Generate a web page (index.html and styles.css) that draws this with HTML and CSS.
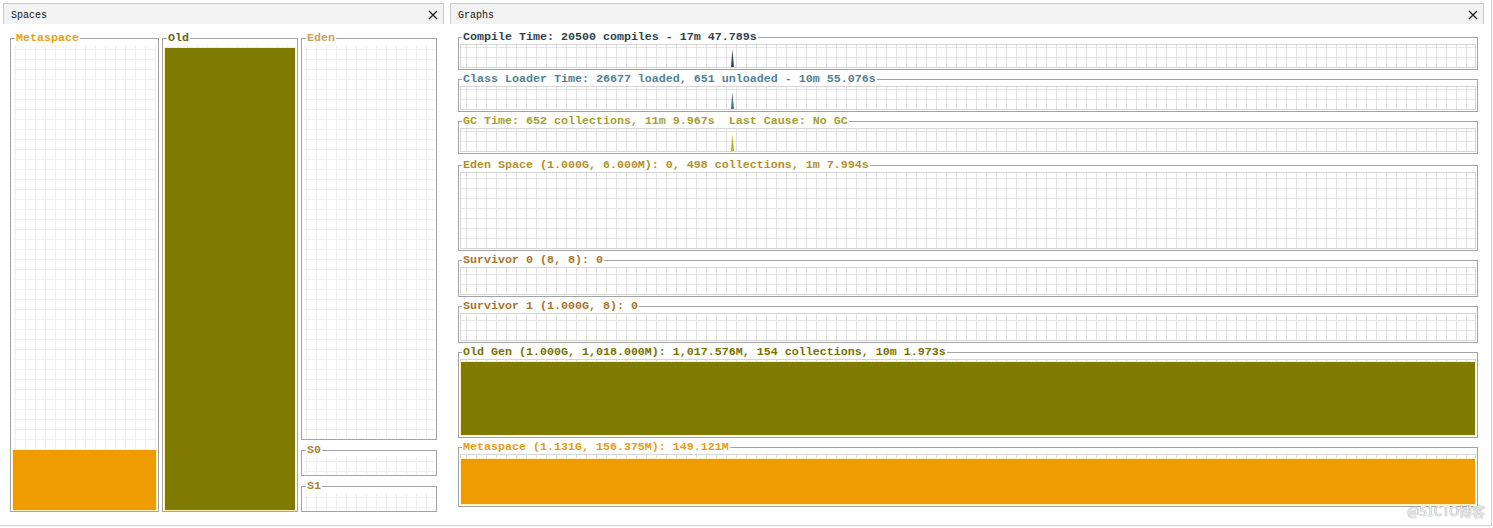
FILE: index.html
```html
<!DOCTYPE html>
<html lang="en">
<head>
<meta charset="utf-8">
<title>Visual GC</title>
<link rel="stylesheet" href="styles.css">
</head>
<body>
<div class="frame">
  <div class="app">
    <section class="panel panel-spaces">
      <header class="panel-head">
        <span class="panel-title">Spaces</span>
        <span class="close"><svg width="10" height="10" viewBox="0 0 10 10"><path d="M1 1L9 9M9 1L1 9" stroke="#222" stroke-width="1.3" fill="none"/></svg></span>
      </header>
      <div class="spaces-body">
        <fieldset class="box box-meta">
          <legend class="lg lg-meta">Metaspace</legend>
          <div class="plot grid-light p-tall"><div class="fill fill-orange" style="height:12.9%"></div></div>
        </fieldset>
        <fieldset class="box box-old">
          <legend class="lg lg-old">Old</legend>
          <div class="plot grid-light p-tall"><div class="fill fill-olive" style="height:99.4%"></div></div>
        </fieldset>
        <div class="col-right">
          <fieldset class="box box-eden">
            <legend class="lg lg-eden">Eden</legend>
            <div class="plot grid-light p-eden"></div>
          </fieldset>
          <fieldset class="box box-s">
            <legend class="lg lg-s">S0</legend>
            <div class="plot grid-light p-s"></div>
          </fieldset>
          <fieldset class="box box-s">
            <legend class="lg lg-s">S1</legend>
            <div class="plot grid-light p-s"></div>
          </fieldset>
        </div>
      </div>
    </section>
    <section class="panel panel-graphs">
      <header class="panel-head">
        <span class="panel-title">Graphs</span>
        <span class="close"><svg width="10" height="10" viewBox="0 0 10 10"><path d="M1 1L9 9M9 1L1 9" stroke="#222" stroke-width="1.3" fill="none"/></svg></span>
      </header>
      <div class="graphs-body">
        <fieldset class="gbox">
          <legend class="lg lg-compile">Compile Time: 20500 compiles - 17m 47.789s</legend>
          <div class="plot grid p-small"><div class="spike spike-compile"></div></div>
        </fieldset>
        <fieldset class="gbox">
          <legend class="lg lg-class">Class Loader Time: 26677 loaded, 651 unloaded - 10m 55.076s</legend>
          <div class="plot grid p-small"><div class="spike spike-class"></div></div>
        </fieldset>
        <fieldset class="gbox">
          <legend class="lg lg-gc">GC Time: 652 collections, 11m 9.967s  Last Cause: No GC</legend>
          <div class="plot grid p-small"><div class="spike spike-gc"></div></div>
        </fieldset>
        <fieldset class="gbox g-eden">
          <legend class="lg lg-eden-g">Eden Space (1.000G, 6.000M): 0, 498 collections, 1m 7.994s</legend>
          <div class="plot grid p-large"></div>
        </fieldset>
        <fieldset class="gbox">
          <legend class="lg lg-surv">Survivor 0 (8, 8): 0</legend>
          <div class="plot grid p-surv"></div>
        </fieldset>
        <fieldset class="gbox">
          <legend class="lg lg-surv">Survivor 1 (1.000G, 8): 0</legend>
          <div class="plot grid p-surv"></div>
        </fieldset>
        <fieldset class="gbox">
          <legend class="lg lg-oldgen">Old Gen (1.000G, 1,018.000M): 1,017.576M, 154 collections, 10m 1.973s</legend>
          <div class="plot grid p-large"><div class="fill fill-olive" style="height:98%"></div></div>
        </fieldset>
        <fieldset class="gbox">
          <legend class="lg lg-meta-g">Metaspace (1.131G, 156.375M): 149.121M</legend>
          <div class="plot grid p-meta"><div class="fill fill-orange" style="height:92%"></div></div>
        </fieldset>
      </div>
    </section>
  </div>
  <div class="watermark">@51CTO博客</div>
</div>
</body>
</html>
```

FILE: styles.css
```css
html, body {
  margin: 0;
  padding: 0;
  background: #ffffff;
}

.frame {
  position: relative;
  width: 1492px;
  height: 526px;
  box-sizing: border-box;
  border-right: 1px solid #cfcfcf;
  border-bottom: 1px solid #cfcfcf;
  overflow: hidden;
}

.app {
  display: flex;
  gap: 6px;
  padding: 3px 0 0 3px;
}

.panel {
  display: flex;
  flex-direction: column;
}

.panel-spaces { width: 441px; }
.panel-graphs { width: 1034px; }

.panel-head {
  height: 21px;
  box-sizing: border-box;
  border: 1px solid #cacaca;
  border-bottom: none;
  background: #f3f3f3;
  display: flex;
  align-items: center;
  justify-content: space-between;
  padding: 2px 5px 0 7px;
}

.panel-title {
  font-family: "Liberation Mono", "DejaVu Sans Mono", monospace;
  font-size: 10px;
  color: #111;
}

.close {
  display: flex;
  width: 10px;
  height: 10px;
}

/* ---------- Spaces ---------- */
.spaces-body {
  display: flex;
  align-items: flex-start;
  gap: 3px;
  padding: 8px 6px 0 7px;
}

.box, .gbox {
  margin: 0;
  border: 1px solid #a3a3a3;
  min-width: 0;
  box-sizing: border-box;
  display: block;
}

.box {
  padding: 1px 2px 1px 2px;
}

.box-meta { width: 149px; }
.box-old { width: 136px; }

.col-right {
  width: 136px;
  display: flex;
  flex-direction: column;
  gap: 4px;
}

.p-tall { height: 465px; }
.p-eden { height: 393px; }
.p-s { height: 17px; }

.lg {
  font-family: "Liberation Mono", "DejaVu Sans Mono", monospace;
  font-weight: bold;
  font-size: 11.67px;
  line-height: 12px;
  padding: 0 1px;
  margin-left: 2px;
  white-space: pre;
}

.lg-meta { color: #e8a012; }
.lg-old { color: #66620c; }
.lg-eden { color: #c9a35c; }
.lg-s { color: #ae823c; }

.lg-compile { color: #2e3f4b; }
.lg-class { color: #4f8294; }
.lg-gc { color: #a3a12e; }
.lg-eden-g { color: #b48f2c; }
.lg-surv { color: #a8742c; }
.lg-oldgen { color: #777300; }
.lg-meta-g { color: #e99b14; }

.plot {
  position: relative;
  box-sizing: border-box;
  display: flex;
  flex-direction: column;
  justify-content: flex-end;
  background-color: #ffffff;
}

.grid-light {
  background-image:
    linear-gradient(to right, #efefef 1px, transparent 1px),
    linear-gradient(to bottom, #efefef 1px, transparent 1px);
  background-size: 10px 10px;
  background-position: 2px 4px;
}

.grid {
  border: 1px solid #d6d6d6;
  background-image:
    linear-gradient(to right, #e0e0e0 1px, transparent 1px),
    linear-gradient(to bottom, #e6e6e6 1px, transparent 1px);
  background-size: 10px 10px;
  background-position: 5px bottom;
}

.fill {
  flex: none;
}

.fill-orange {
  background: #ee9c02;
  box-shadow: 0 0 0 1px #fff1c2;
}

.fill-olive {
  background: #7f7a00;
  box-shadow: 0 0 0 1px #fff1b0;
}

/* ---------- Graphs ---------- */
.graphs-body {
  display: flex;
  flex-direction: column;
  align-items: flex-start;
  gap: 3px;
  padding: 7px 6px 0 8px;
}

.gbox {
  width: 1020px;
  padding: 1px 1px 1px 1px;
}

.g-eden { margin-top: 2px; }

.p-small { height: 24px; }
.p-large { height: 77px; }
.p-surv { height: 28px; }
.p-meta { height: 51px; }

.spike {
  position: absolute;
  left: 270px;
  bottom: 0;
  width: 3px;
  clip-path: polygon(45% 0, 100% 100%, 0 100%);
}

.spike-compile { height: 18px; background: #2f4a55; }
.spike-class { height: 17px; background: #4a7488; }
.spike-gc { height: 17px; background: #b5b226; }

.watermark {
  position: absolute;
  right: 6px;
  bottom: 6px;
  font-family: "Noto Sans CJK SC", "Noto Sans", sans-serif;
  font-size: 13px;
  line-height: 16px;
  color: rgba(255, 255, 255, 0.85);
  text-shadow: 0 0 1px #9a9a9a, 0 0 1px #9a9a9a;
}
```
